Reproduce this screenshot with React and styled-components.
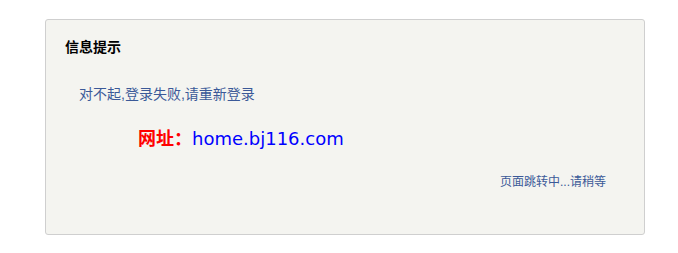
import React from 'react';
import styled, { createGlobalStyle } from 'styled-components';

const GlobalStyle = createGlobalStyle`
  body {
    margin: 0;
    background: #fff;
    font-family: "Liberation Sans", "Noto Sans CJK SC", sans-serif;
  }
`;

const Page = styled.div`
  padding: 19px 0 0 45px;
`;

const MsgBox = styled.div`
  box-sizing: border-box;
  width: 600px;
  height: 216px;
  background: #f4f4f0;
  border: 1px solid #cfcfcf;
  border-radius: 3px;
  padding: 19px 38px 0 19px;
`;

const Title = styled.h3`
  margin: 0;
  font-size: 14px;
  font-weight: bold;
  line-height: 16px;
  color: #000;
`;

const Message = styled.p`
  margin: 31px 0 0 14px;
  font-size: 14px;
  line-height: 16px;
  color: #3b5998;
`;

const Site = styled.div`
  margin: 26px 0 0 73px;
  font-size: 18px;
  line-height: 22px;
  font-family: "DejaVu Sans", "Noto Sans CJK SC", sans-serif;
`;

const Label = styled.span`
  color: #f00;
  font-weight: bold;
`;

const Url = styled.span`
  color: #00f;
`;

const Redirect = styled.div`
  margin-top: 24px;
  text-align: right;
  font-size: 12px;
  line-height: 16px;
  color: #3b5998;
`;

export default function App() {
  return (
    <>
      <GlobalStyle />
      <Page>
        <MsgBox>
          <Title>信息提示</Title>
          <Message>对不起,登录失败,请重新登录</Message>
          <Site>
            <Label>网址：</Label>
            <Url>home.bj116.com</Url>
          </Site>
          <Redirect>页面跳转中...请稍等</Redirect>
        </MsgBox>
      </Page>
    </>
  );
}
